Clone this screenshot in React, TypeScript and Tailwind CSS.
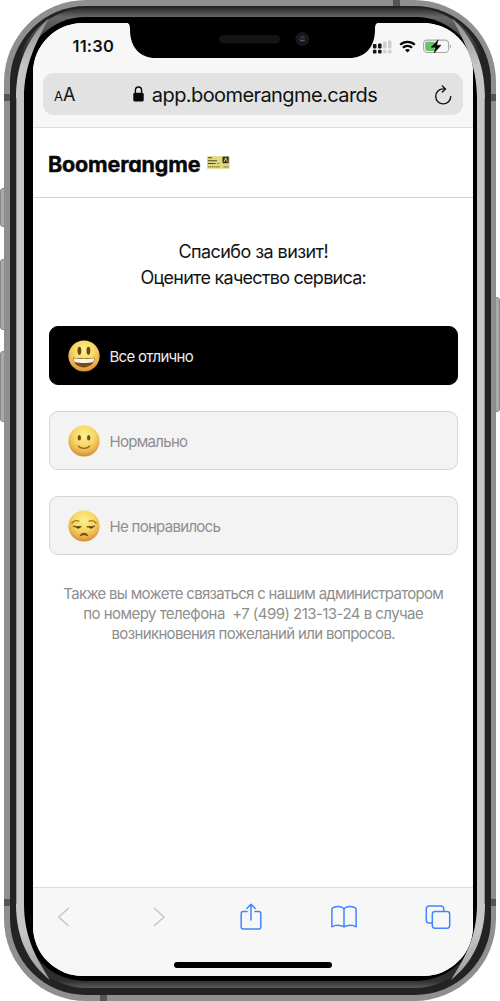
import type { ReactNode } from 'react';

type Mood = 'happy' | 'ok' | 'bad';

function Face({ kind }: { kind: Mood }) {
  const id = `face-${kind}`;
  return (
    <svg className="h-8 w-8 shrink-0" viewBox="0 0 32 32" fill="none">
      <defs>
        <radialGradient id={id} cx="50%" cy="32%" r="68%">
          <stop offset="0" stopColor="#fcf28c" />
          <stop offset="0.5" stopColor="#f7d665" />
          <stop offset="0.8" stopColor="#eab04c" />
          <stop offset="1" stopColor="#d08a38" />
        </radialGradient>
      </defs>
      <circle cx="16" cy="16" r="15.6" fill={`url(#${id})`} />
      {kind === 'happy' && (
        <>
          <ellipse cx="11.4" cy="10.8" rx="1.9" ry="4.1" fill="#6b4413" />
          <ellipse cx="20.4" cy="10.8" rx="1.9" ry="4.1" fill="#6b4413" />
          <path d="M5.2 17.6c3.6 1.2 17.8 1.2 21.4 0-.2 6-4.400 9.800-10.700 9.800S5.400 23.600 5.200 17.600Z" fill="#7a4a18" />
          <path d="M5.700 18.200c4.800 1 15.700 1 20.400 0 0 1.700-.4 2.800-1.100 3.700-5 1.500-13.200 1.500-18.200 0-.7-.9-1.100-2-1.100-3.700Z" fill="#f6f6ee" />
        </>
      )}
      {kind === 'ok' && (
        <>
          <ellipse cx="11.3" cy="12.7" rx="1.7" ry="2.7" fill="#70501c" />
          <ellipse cx="20.7" cy="12.7" rx="1.7" ry="2.7" fill="#70501c" />
          <path d="M10.400 21.200c3.200 2.800 8 2.800 11.200 0" stroke="#8a5d1d" strokeWidth="1.2" strokeLinecap="round" />
        </>
      )}
      {kind === 'bad' && (
        <>
          <path d="M3.800 13.200c2-2.600 4.600-3 7-2M28.200 13.200c-2-2.600-4.600-3-7-2" stroke="#a87728" strokeWidth="1.400" strokeLinecap="round" />
          <path d="M5.600 16.200c2 .5 4.600.6 7.400.5M19.200 16.700c2.600.1 5.200 0 7.200-.5" stroke="#7b5a20" strokeWidth="1.400" strokeLinecap="round" />
          <path d="M8.200 16.900c.4 2.300 3.700 2.300 4 0ZM21 16.900c.4 2.300 3.700 2.300 4 0Z" fill="#5c3f12" />
          <path d="M12.200 25.800c.8-3.300 6.800-3.300 7.600 0-2.400-1.500-5.200-1.500-7.600 0Z" fill="#70501c" stroke="#70501c" strokeWidth="1" strokeLinejoin="round" />
        </>
      )}
    </svg>
  );
}

function Option({ kind, active, children }: { kind: Mood; active?: boolean; children: ReactNode }) {
  return (
    <button
      className={
        active
          ? 'flex h-[59.5px] w-full items-center gap-[9.5px] rounded-[9px] border border-black bg-black pl-[18px] pt-[1px] text-[15px] tracking-[-0.72px] text-[#ededed]'
          : 'flex h-[59.5px] w-full items-center gap-[9.5px] rounded-[9px] border border-[#d6d6d6] bg-[#f3f3f3] pl-[18px] pt-[1px] text-[15px] tracking-[-0.7px] text-[#8e8e8e]'
      }
    >
      <Face kind={kind} />
      <span className="whitespace-nowrap pt-[2.5px]">{children}</span>
    </button>
  );
}

function StatusBar() {
  return (
    <div className="flex h-[50px] items-start justify-between pl-[39.5px] pr-[22px] pt-[13px]">
      <span className="text-[16.5px] font-semibold leading-[21px] tracking-[0.2px] text-[#111]">11:30</span>
      <div className="flex h-[21px] items-center gap-[7px]">
        <svg className="h-[14px] w-[20px]" viewBox="0 0 20 14">
          <g fill="#151515">
            <rect x="0.9" y="4" width="3.6" height="4.5" rx="1" />
            <rect x="6" y="3.4" width="3.6" height="5.1" rx="1" />
            <rect x="0.9" y="9.8" width="3.6" height="3.6" rx="1" />
            <rect x="6" y="9.8" width="3.6" height="3.6" rx="1" />
          </g>
          <g fill="#cfcfcf">
            <rect x="11" y="1.6" width="3.5" height="6.9" rx="1" />
            <rect x="16" y="0.4" width="3.5" height="8.1" rx="1" />
            <rect x="11" y="9.8" width="3.5" height="3.6" rx="1" />
            <rect x="16" y="9.8" width="3.5" height="3.6" rx="1" />
          </g>
        </svg>
        <svg className="h-[13px] w-[17px]" viewBox="0 0 17 13" fill="none" stroke="#050505" strokeWidth="2.2">
          <path d="M1.200 4.700C5.300.8 11.700.8 15.800 4.700" />
          <path d="M3.900 7.700c2.600-2.400 6.600-2.400 9.200 0" />
          <path d="M6 9.900c1.400-1.300 3.600-1.300 5 0l-2.500 2.600Z" fill="#050505" stroke="none" />
        </svg>
        <svg className="h-[15px] w-[28px]" viewBox="0 0 28 15">
          <rect x="0.6" y="1.1" width="25" height="12.400" rx="3.600" fill="none" stroke="#a9a9a9" strokeWidth="1.100" />
          <path d="M26.800 5.200c1.400.8 1.400 3.600 0 4.400Z" fill="#a9a9a9" />
          <path d="M4 2.700h7.300v9.200H4A1.800 1.800 0 0 1 2.200 10.100V4.500A1.800 1.800 0 0 1 4 2.700Z" fill="#65c466" />
          <path d="M15.200.8 8.200 8.300h4.300L11 14l7-7.800h-4.400Z" fill="#050505" stroke="#050505" strokeWidth=".5" strokeLinejoin="round" />
        </svg>
      </div>
    </div>
  );
}

function AddressBar() {
  return (
    <div className="mx-[10px] flex h-[42px] items-center rounded-[11px] bg-[#e2e2e2] pl-[11px] pr-[11px] text-[#111]">
      <div className="flex w-[34px] items-baseline">
        <span className="text-[13px]">A</span>
        <span className="text-[18px]">A</span>
      </div>
      <div className="flex flex-1 items-center justify-center gap-[8px] pl-[16px] pr-[28px]">
        <svg className="h-[16px] w-[11px] shrink-0" viewBox="0 0 11 16">
          <path d="M2.400 8V4.500a3.100 3.500 0 0 1 6.200 0V8" fill="none" stroke="#080808" strokeWidth="1.400" />
          <rect x="0.3" y="6.7" width="10.4" height="8.8" rx="1.5" fill="#080808" />
        </svg>
        <span className="whitespace-nowrap pt-[1px] text-[20px] tracking-[-0.58px]">app.boomerangme.cards</span>
      </div>
      <svg className="mt-[1px] h-[20px] w-[18px] shrink-0" viewBox="0 0 18 20" fill="none" stroke="#151515" strokeWidth="1.4" strokeLinecap="round" strokeLinejoin="round">
        <path d="M11.300 3.900H9.200a7.500 7.500 0 1 0 7.500 7.500" />
        <path d="m8.300.9 3.200 3-3.200 3.200" />
      </svg>
    </div>
  );
}

function Ticket() {
  return (
    <svg className="mb-[1px] h-[13px] w-[23px]" viewBox="0 0 23 13">
      <rect width="22.600" height="12.600" y=".2" fill="#e2d97c" />
      <rect x="15.500" y=".6" width="6.200" height="6.600" fill="#302d1d" />
      <path d="m17 5.800 1.700-4 1.600 4" stroke="#ddd47c" fill="none" />
      <g stroke="#4a4628" strokeWidth="1.100">
        <path d="M1 1.800h4" />
        <path d="M1 4.700h9" />
        <path d="M1 7.500h7.500" />
        <path d="M10 7.500h2.500" opacity=".5" />
      </g>
      <path d="M1 10.900h12m3.500 0h5.300" stroke="#68623a" strokeWidth="1" strokeDasharray="1.500 .5" />
    </svg>
  );
}

function Toolbar() {
  return (
    <div className="flex h-[89px] flex-col items-center border-t border-[#dcdcdc] bg-[#f7f7f7]">
      <div className="flex h-[57px] w-full items-center pl-[23.5px]">
        <svg className="h-[22px] w-[14px]" viewBox="0 0 14 22" fill="none" stroke="#c6c6c6" strokeWidth="1.5">
          <path d="m11.700 2-10 9 10 9" />
        </svg>
        <svg className="ml-[81px] h-[22px] w-[14px]" viewBox="0 0 14 22" fill="none" stroke="#c6c6c6" strokeWidth="1.5">
          <path d="m2 2 10 9-10 9" />
        </svg>
        <svg className="ml-[74.5px] h-[28px] w-[22px]" viewBox="0 0 22 28" fill="none" stroke="#4285fa" strokeWidth="1.5" strokeLinecap="round" strokeLinejoin="round">
          <path d="M7 8.500H3.200a2 2 0 0 0-2 2V24a2 2 0 0 0 2 2h15.600a2 2 0 0 0 2-2V10.500a2 2 0 0 0-2-2H15" />
          <path d="M11 17V1.300M6.800 5.500 11 1.300 15.200 5.500" />
        </svg>
        <svg className="ml-[69px] h-[24px] w-[26px]" viewBox="0 0 26 24" fill="none" stroke="#4285fa" strokeWidth="1.5" strokeLinejoin="round">
          <path d="M13 3.900C10.800.7 3.700.6.900 3.500v18.300c3.200-2.100 9-2 12.100.1 3.100-2.100 8.900-2.200 12.100-.1V3.500C22.300.6 15.200.7 13 3.900Zm0 0v18" />
        </svg>
        <svg className="ml-[68px] h-[24px] w-[26px]" viewBox="0 0 26 24" fill="none" stroke="#4285fa" strokeWidth="1.5">
          <path d="M7 18H4a2.700 2.700 0 0 1-2.700-2.700V3.700A2.700 2.700 0 0 1 4 1h12a2.700 2.700 0 0 1 2.700 2.700v2.900" />
          <rect x="7.3" y="6.6" width="17.400" height="16.600" rx="2.700" />
        </svg>
      </div>
      <div className="mt-[17px] h-[5.5px] w-[158px] rounded-full bg-black" />
    </div>
  );
}

function Screen() {
  return (
    <div className="flex h-[953px] w-[440px] flex-col overflow-hidden rounded-[50px] bg-white">
      <div className="h-[105px] shrink-0 border-b border-[#dedede] bg-[#f7f7f7]">
        <StatusBar />
        <AddressBar />
      </div>
      <header className="flex h-[70px] shrink-0 items-center gap-[6.5px] border-b border-[#d2d2d2] pl-[15px]">
        <span className="mt-[3px] whitespace-nowrap text-[21.5px] font-bold leading-[26px] tracking-[-0.17px] text-[#080808] [font-feature-settings:'cv11'] [-webkit-text-stroke:0.4px_#080808]">
          Boomerangme
        </span>
        <Ticket />
      </header>
      <main className="flex flex-1 flex-col items-center pl-[16px] pr-[15.5px] pt-[41px]">
        <h1 className="flex flex-col items-center whitespace-nowrap text-[18px] leading-[26px] text-[#141414]">
          <span className="tracking-[-0.57px]">Спасибо за визит!</span>
          <span className="tracking-[-0.74px]">Оцените качество сервиса:</span>
        </h1>
        <div className="mt-[34.5px] flex w-full flex-col gap-[25.7px]">
          <Option kind="happy" active>Все отлично</Option>
          <Option kind="ok">Нормально</Option>
          <Option kind="bad">Не понравилось</Option>
        </div>
        <p className="mt-[28.5px] flex flex-col items-center whitespace-pre text-[15px] leading-[20px] text-[#8e8e8e]">
          <span className="tracking-[-0.7px]">Также вы можете связаться с нашим администратором</span>
          <span className="tracking-[-0.54px]">{'по номеру телефона  +7 (499) 213-13-24 в случае'}</span>
          <span className="tracking-[-0.65px]">возникновения пожеланий или вопросов.</span>
        </p>
      </main>
      <Toolbar />
    </div>
  );
}

function FrameDetails() {
  return (
    <svg className="pointer-events-none absolute inset-0 h-[1001px] w-[500px]" viewBox="0 0 500 1001">
      <defs>
        <linearGradient id="glint" x1="0" x2="0" y1="18" y2="980" gradientUnits="userSpaceOnUse">
          <stop offset="0" stopColor="#8c8c8c" />
          <stop offset="0.05" stopColor="#c6c6c6" />
          <stop offset="0.95" stopColor="#c6c6c6" />
          <stop offset="1" stopColor="#9c9c9c" />
        </linearGradient>
      </defs>
      <path d="M49 18C30 36 16 60 16 98V904c0 36 14 60 34 76C37 959 24 938 24 904V98C24 64 37 41 49 18Z" fill="url(#glint)" />
      <path d="M452 18C471 36 485 60 485 98V904c0 36-14 60-34 76C464 959 477 938 477 904V98C477 64 464 41 452 18Z" fill="url(#glint)" />
      <path d="M16.500 98V904M484.500 98V904" stroke="#929292" />
      <g fill="#555">
        <rect x="4" y="94" width="6" height="7" />
        <rect x="491" y="94" width="5" height="7" />
        <rect x="4" y="899" width="6" height="7" />
        <rect x="491" y="899" width="5" height="7" />
        <rect x="393" y="0" width="7" height="6" />
        <rect x="100" y="995" width="7" height="6" />
      </g>
      <path d="M121 22.500h4c4.500 0 5 3 5 7 0 18 10 28.500 26 28.500h193c16 0 26-10.500 26-28.500 0-4 .5-7 5-7h4v-1H121Z" fill="#000" />
      <rect x="219" y="35" width="61" height="8.500" rx="4.200" fill="#141416" />
      <circle cx="302.3" cy="39" r="7" fill="#17171b" />
      <circle cx="302.3" cy="39" r="3.500" fill="#22242f" />
      <path d="M300 40.500h4.600M302.300 36v2" stroke="#565b70" strokeWidth=".9" />
    </svg>
  );
}

export default function App() {
  return (
    <div className="relative h-[1001px] w-[500px] overflow-hidden bg-white font-['Inter','Liberation_Sans',sans-serif]">
      <div className="absolute left-0 top-[188px] h-[39px] w-[8px] rounded-l-[3px] border border-[#888] bg-[#aaa]" />
      <div className="absolute left-0 top-[259px] h-[71px] w-[8px] rounded-l-[3px] border border-[#888] bg-[#aaa]" />
      <div className="absolute left-0 top-[351px] h-[71px] w-[8px] rounded-l-[3px] border border-[#888] bg-[#aaa]" />
      <div className="absolute right-0 top-[297px] h-[115px] w-[8px] rounded-r-[3px] border border-[#888] bg-[#aaa]" />
      <div className="relative mx-[4px] h-[1001px] rounded-[82px] bg-[#8f8f8f] pb-[6px] pl-[6px] pr-[5px] pt-[6px]">
        <div className="h-full rounded-[76px] bg-[#232323] pb-[7px] pl-[6px] pr-[6px] pt-[2px]">
          <div className="h-full rounded-[71px] bg-[linear-gradient(to_bottom,#2c2c2c_0px,#686868_9px,#232323_50px,#232323_940px,#303030_973px,#5a5a5a_980px)] pb-[7px] pl-[8px] pr-[8px] pt-[9px]">
            <div className="h-full rounded-[61px] bg-black pl-[9px] pr-[4px] pt-[6px]">
              <Screen />
            </div>
          </div>
        </div>
      </div>
      <FrameDetails />
    </div>
  );
}
